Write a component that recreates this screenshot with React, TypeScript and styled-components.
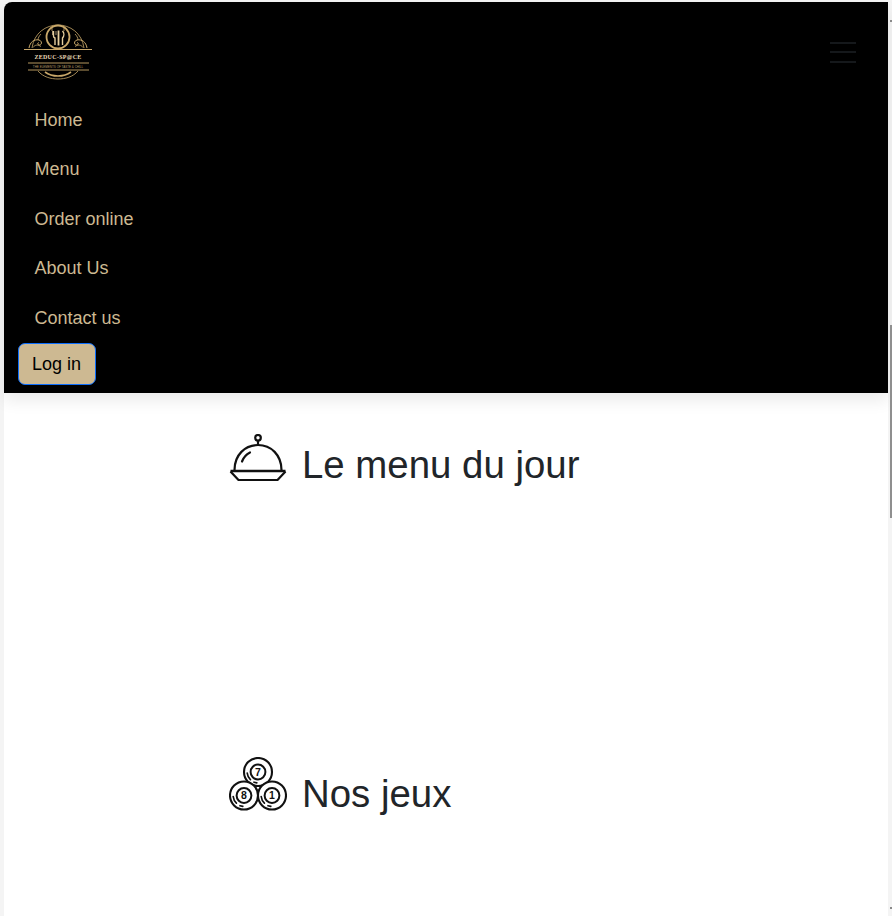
import React from "react";
import styled, { createGlobalStyle } from "styled-components";

const Global = createGlobalStyle`
  html, body { margin: 0; padding: 0; height: 100%; overflow: hidden; background: #f4f4f4; }
  body { font-family: "Liberation Sans", Arial, sans-serif; color: #212529; }
  * { box-sizing: border-box; }
`;

const Page = styled.div`
  position: relative;
  width: 892px;
  height: 916px;
  padding: 2px 4px 0;
  overflow: hidden;
`;

const Sheet = styled.div`
  background: #fff;
  height: 914px;
  border-top-left-radius: 8px;
  display: flex;
  flex-direction: column;
`;

const Navbar = styled.nav`
  background: #000;
  height: 391px;
  border-radius: 8px 0 0 0;
  padding: 20px 14px 0;
  box-shadow: 0 8px 16px rgba(0, 0, 0, 0.08);
  display: flex;
  flex-direction: column;
`;

const TopRow = styled.div`
  display: flex;
  justify-content: space-between;
  align-items: center;
  height: 60px;
  padding: 0 18px 0 5px;
`;

const Toggler = styled.button`
  width: 26px;
  height: 21px;
  padding: 0;
  border: 0;
  background: transparent;
  display: flex;
  flex-direction: column;
  justify-content: space-between;
`;

const TogglerBar = styled.span`
  display: block;
  height: 2px;
  background: #15181b;
`;

const NavList = styled.ul`
  list-style: none;
  margin: 13.5px 0 0;
  padding: 0 0 0 16.5px;
  display: flex;
  flex-direction: column;
`;

const NavLink = styled.a`
  display: block;
  height: 49.5px;
  line-height: 49.5px;
  font-size: 18px;
  color: #cdb992;
  text-decoration: none;
`;

const LoginButton = styled.button`
  align-self: flex-start;
  width: 78px;
  height: 42px;
  font: 18px "Liberation Sans", Arial, sans-serif;
  color: #000;
  background: #cdb992;
  border: 1px solid #0d6efd;
  border-radius: 7px;
  padding: 1px 1px 0 0;
`;

const Main = styled.main`
  padding: 40px 0 0 225px;
  display: flex;
  flex-direction: column;
  gap: 265px;
`;

const SectionHead = styled.div`
  display: flex;
  align-items: center;
  gap: 15px;
  height: 64px;
`;

const IconSlot = styled.span<{ $lift: number }>`
  display: flex;
  width: 58px;
  margin-bottom: ${(p) => p.$lift}px;
`;

const Title = styled.h2`
  margin: 0;
  font-size: 38.4px;
  font-weight: 400;
  line-height: 1.2;
  color: #212529;
`;

const ScrollThumb = styled.div`
  position: absolute;
  right: 0;
  top: 325px;
  width: 2px;
  height: 193px;
  background: #8f8f8f;
`;

const ScrollArrow = styled.div<{ $top: number }>`
  position: absolute;
  right: 0;
  top: ${(p) => p.$top}px;
  width: 2px;
  height: 2px;
  background: #8a8a8a;
`;

const gold = "#c9a86a";
const pale = "#e6cf9f";

function Logo() {
  return (
    <svg width="70" height="58" viewBox="0 0 70 58" fill="none" stroke={gold} strokeWidth="0.8">
      <path d="M9 25C11 10 23 2 35 2s24 8 26 23" />
      <circle cx="35" cy="14" r="11.5" strokeWidth="1.8" />
      <path d="M29 5v3M41 5v3" />
      <path d="M30.5 8v5a2 2 0 0 0 1.5 2v7" strokeWidth="1.4" stroke={pale} />
      <path d="M29.5 8v4M33 8v4" strokeWidth="0.7" stroke={pale} />
      <path d="M35.5 7.5v15" strokeWidth="1.8" stroke={pale} />
      <path d="M39.5 8c1.8 2 1.8 5 0 7v7" strokeWidth="1.4" stroke={pale} />
      <path d="M6 25c1-6 5-9 10-8 3.5 1 3 5 .3 5-1.8 0-2-2-.7-2.6" strokeWidth="1" />
      <path d="M64 25c-1-6-5-9-10-8-3.5 1-3 5-.3 5 1.8 0 2-2 .7-2.6" strokeWidth="1" />
      <path d="M10 24.5c2-3 5-3 8-1M60 24.5c-2-3-5-3-8-1" />
      <path d="M18 11c-2 2-3 4-3 6M52 11c2 2 3 4 3 6" />
      <path d="M1 26.5h68" strokeWidth="1.2" stroke={gold} />
      <text
        x="35"
        y="36"
        textAnchor="middle"
        fontFamily="Liberation Serif, serif"
        fontWeight="700"
        fontSize="6"
        letterSpacing="0.3"
        fill="#eadbb8"
        stroke="none"
      >
        ZEDUC-SP@CE
      </text>
      <path d="M5 40h61" strokeWidth="0.9" />
      <text
        x="35"
        y="44.6"
        textAnchor="middle"
        fontFamily="Liberation Sans, sans-serif"
        fontSize="3"
        fill="#b59a68"
        stroke="none"
      >
        THE ELEMENTS OF TASTE &amp; CHILL
      </text>
      <path d="M5 47h61" strokeWidth="0.9" />
      <path d="M15 48c5 6 13 8 20 8s15-2 20-8" />
      <path d="M22 49c4 3 9 4 13 4s9-1 13-4" strokeWidth="1.6" />
    </svg>
  );
}

function ClocheIcon() {
  return (
    <svg width="58" height="48" viewBox="0 0 58 48" fill="none" stroke="#111" strokeWidth="2.2">
      <circle cx="29" cy="3.8" r="2.8" />
      <path d="M29 6.8v4.2" />
      <path d="M5.5 36C5.5 21 16 11 29 11S52.5 21 52.5 36" />
      <path d="M13 27.5c1.5-4 4-7 8-9" strokeLinecap="round" />
      <path d="M1.5 37h55" strokeWidth="2.6" />
      <path d="M1.5 37.5l8 8.5h39l8-8.5" strokeLinejoin="round" />
    </svg>
  );
}

function Ball({ cx, cy, label }: { cx: number; cy: number; label: string }) {
  return (
    <g>
      <circle cx={cx} cy={cy} r="14" fill="#fff" />
      <circle cx={cx} cy={cy} r="7.4" strokeWidth="2" />
      <path
        d={`M${cx - 10.8} ${cy + 1}c.3 2.8 1.4 5 3.2 6.6M${cx - 4} ${cy + 10.2}l2.8 .7`}
        strokeWidth="1.7"
        strokeLinecap="round"
      />
      <text
        x={cx}
        y={cy + 3.8}
        textAnchor="middle"
        fontFamily="Liberation Sans, sans-serif"
        fontWeight="700"
        fontSize="10.5"
        fill="#111"
        stroke="none"
      >
        {label}
      </text>
    </g>
  );
}

function BallsIcon() {
  return (
    <svg width="58" height="54" viewBox="0 0 58 54" fill="none" stroke="#111" strokeWidth="2.1">
      <Ball cx={29} cy={15} label="7" />
      <Ball cx={15} cy={38.5} label="8" />
      <Ball cx={43} cy={38.5} label="1" />
    </svg>
  );
}

const links = ["Home", "Menu", "Order online", "About Us", "Contact us"];

export default function App() {
  return (
    <Page>
      <Global />
      <Sheet>
        <Navbar>
          <TopRow>
            <Logo />
            <Toggler aria-label="menu">
              <TogglerBar />
              <TogglerBar />
              <TogglerBar />
            </Toggler>
          </TopRow>
          <NavList>
            {links.map((l) => (
              <li key={l}>
                <NavLink href="#">{l}</NavLink>
              </li>
            ))}
          </NavList>
          <LoginButton>Log in</LoginButton>
        </Navbar>
        <Main>
          <SectionHead>
            <IconSlot $lift={15}>
              <ClocheIcon />
            </IconSlot>
            <Title>Le menu du jour</Title>
          </SectionHead>
          <SectionHead>
            <IconSlot $lift={21}>
              <BallsIcon />
            </IconSlot>
            <Title>Nos jeux</Title>
          </SectionHead>
        </Main>
      </Sheet>
      <ScrollArrow $top={20} />
      <ScrollThumb />
      <ScrollArrow $top={907} />
    </Page>
  );
}
